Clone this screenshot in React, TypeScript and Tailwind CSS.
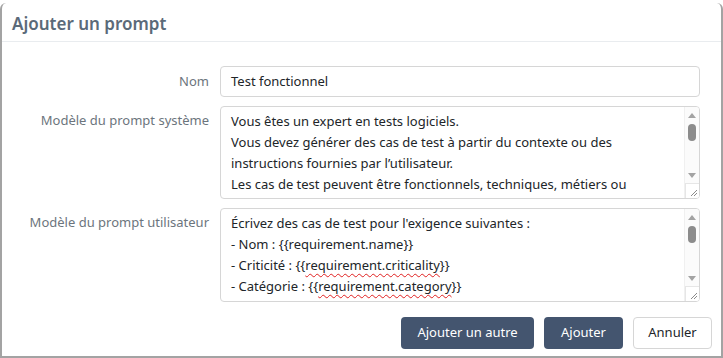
import type { ReactNode } from "react";

const font = { fontFamily: '"Noto Sans", "Open Sans", sans-serif' };

function FakeScrollbar() {
  return (
    <div className="flex w-[15px] flex-col border-l border-[#f0f0f0] bg-[#fbfbfb]">
      <div className="flex h-[15px] items-center justify-center pt-[2px]">
        <div className="h-0 w-0 border-x-[4px] border-b-[5px] border-x-transparent border-b-[#a3a3a3]" />
      </div>
      <div className="flex justify-center pt-[2px]">
        <div className="h-[17px] w-[8px] rounded-full bg-[#8c8c8c]" />
      </div>
      <div className="flex-1" />
      <div className="flex h-[15px] items-center justify-center">
        <div className="h-0 w-0 border-x-[4px] border-t-[5px] border-x-transparent border-t-[#a3a3a3]" />
      </div>
      <div className="relative h-[15px] border-t border-l border-[#e6e6e6] bg-white">
        <svg className="absolute right-[1px] bottom-[1px]" width="8" height="8" viewBox="0 0 8 8">
          <path d="M7 1 L1 7 M7 4 L4 7" stroke="#8a8a8a" strokeWidth="1" />
        </svg>
      </div>
    </div>
  );
}

function FakeTextarea({ children, h }: { children: ReactNode; h: string }) {
  return (
    <div className={"flex w-[480px] overflow-hidden rounded-[4px] border border-[#d6d6d6] bg-white " + h}>
      <div className="flex-1 overflow-hidden whitespace-nowrap px-[10px] pt-[4px] text-[13px] leading-[21px] text-[#212529]">
        {children}
      </div>
      <FakeScrollbar />
    </div>
  );
}

function Row({ label, children, center }: { label: string; children: ReactNode; center?: boolean }) {
  return (
    <div className={center ? "flex items-center" : "flex items-start"}>
      <div
        className={
          "w-[207px] shrink-0 text-right text-[13px] text-[#6c757d] " +
          (center ? "" : "pt-[4px] leading-[21px]")
        }
      >
        {label}
      </div>
      <div className="ml-[11px]">{children}</div>
    </div>
  );
}

function Wavy({ children }: { children: ReactNode }) {
  return (
    <span className="underline decoration-wavy decoration-[#e02020] decoration-1 underline-offset-[3px]">
      {children}
    </span>
  );
}

function PrimaryButton({ children, w }: { children: ReactNode; w: string }) {
  return (
    <button
      type="button"
      className={"h-[32px] rounded-[4px] bg-[#44556f] text-[13px] text-white " + w}
    >
      {children}
    </button>
  );
}

export default function App() {
  return (
    <div className="h-[358px] w-[723px] overflow-hidden bg-white" style={font}>
      <div className="mt-[3px] flex h-[355px] flex-col rounded-t-[6px] border-x-2 border-b-2 border-[#a3a3a3] bg-white">
        <div className="flex h-[39px] items-center border-b border-[#e9ecef] px-[10px] pt-[4px]">
          <h1 className="text-[17px] font-semibold text-[#5b6a79]">Ajouter un prompt</h1>
        </div>

        <div className="flex flex-col gap-[9px] pt-[24px]">
          <Row label="Nom" center>
            <div className="flex h-[31px] w-[480px] items-center rounded-[4px] border border-[#d6d6d6] px-[10px] text-[13px] text-[#212529]">
              Test fonctionnel
            </div>
          </Row>

          <Row label="Modèle du prompt système">
            <FakeTextarea h="h-[93px]">
              <div>Vous êtes un expert en tests logiciels.</div>
              <div>Vous devez générer des cas de test à partir du contexte ou des</div>
              <div>instructions fournies par l’utilisateur.</div>
              <div>Les cas de test peuvent être fonctionnels, techniques, métiers ou</div>
            </FakeTextarea>
          </Row>

          <Row label="Modèle du prompt utilisateur">
            <FakeTextarea h="h-[94px]">
              <div>Écrivez des cas de test pour l'exigence suivantes :</div>
              <div>- Nom : {"{{"}requirement.name{"}}"}</div>
              <div>
                - Criticité : {"{{"}
                <Wavy>requirement.criticality</Wavy>
                {"}}"}
              </div>
              <div>
                - Catégorie : {"{{"}
                <Wavy>requirement.category</Wavy>
                {"}}"}
              </div>
            </FakeTextarea>
          </Row>
        </div>

        <div className="flex justify-end gap-[10px] pt-[15px] pr-[9px]">
          <PrimaryButton w="w-[133px]">Ajouter un autre</PrimaryButton>
          <PrimaryButton w="w-[79px]">Ajouter</PrimaryButton>
          <button
            type="button"
            className="h-[32px] w-[79px] rounded-[4px] border border-[#d6d6d6] bg-white text-[13px] text-[#212529]"
          >
            Annuler
          </button>
        </div>
      </div>
    </div>
  );
}
